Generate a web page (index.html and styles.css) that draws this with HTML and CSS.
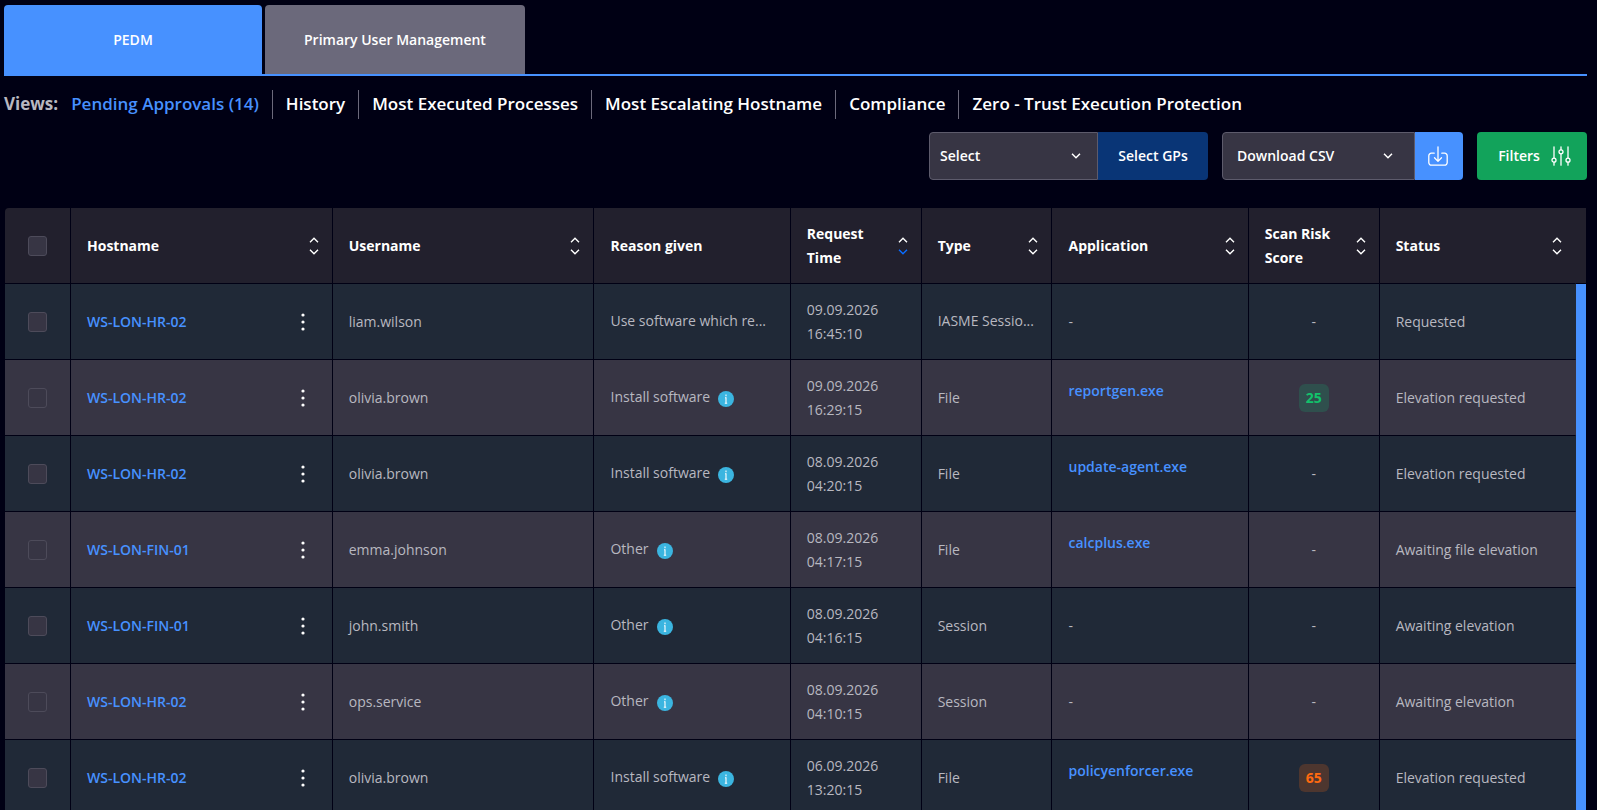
FILE: index.html
```html
<!DOCTYPE html>
<html lang="en">
<head>
<meta charset="utf-8">
<title>PEDM - Pending Approvals</title>
<link rel="stylesheet" href="styles.css">
</head>
<body>
<svg class="defs" aria-hidden="true">
  <symbol id="up" viewBox="0 0 10 6"><path d="M1 5.2 5 1.2l4 4"/></symbol>
  <symbol id="down" viewBox="0 0 10 6"><path d="M1 .8l4 4 4-4"/></symbol>
  <symbol id="dots" viewBox="0 0 4 18"><circle cx="2" cy="2" r="1.6"/><circle cx="2" cy="9" r="1.6"/><circle cx="2" cy="16" r="1.6"/></symbol>
  <symbol id="info" viewBox="0 0 16 16"><circle cx="8" cy="8" r="8" fill="#3bb5e0"/><path d="M8 3.6v1.6M7 6.8h1v5.4M6.8 12.2h2.4" fill="none" stroke="#fff" stroke-width="1.1"/></symbol>
</svg>
<main class="page">
  <nav class="tabs">
    <button class="tab tab-active" type="button">PEDM</button>
    <button class="tab" type="button">Primary User Management</button>
  </nav>
  <nav class="views">
    <span class="views-label">Views:</span>
    <a class="view view-active" href="#">Pending Approvals (14)</a>
    <a class="view" href="#">History</a>
    <a class="view" href="#">Most Executed Processes</a>
    <a class="view" href="#">Most Escalating Hostname</a>
    <a class="view" href="#">Compliance</a>
    <a class="view" href="#">Zero - Trust Execution Protection</a>
  </nav>
  <div class="toolbar">
    <div class="group">
      <select class="select select-action" aria-label="Select action"><option>Select</option></select>
      <button class="btn btn-gps" type="button">Select GPs</button>
    </div>
    <div class="group">
      <select class="select select-csv" aria-label="Download format"><option>Download CSV</option></select>
      <button class="btn btn-download" type="button" aria-label="Download">
        <svg width="20" height="20" viewBox="0 0 20 20" fill="none" stroke="currentColor" stroke-width="1.3" stroke-linecap="round" stroke-linejoin="round"><path d="M10 .8v14.4M6.5 11.8l3.5 3.6 3.5-3.6M6.2 7.2H3.4A2.6 2.6 0 0 0 .8 9.8v6.8a2.6 2.6 0 0 0 2.6 2.6h13.2a2.6 2.6 0 0 0 2.6-2.6V9.8a2.6 2.6 0 0 0-2.6-2.6h-2.8"/></svg>
      </button>
    </div>
    <button class="btn btn-filters" type="button">Filters
      <svg width="20" height="20" viewBox="0 0 20 20" fill="none" stroke="currentColor" stroke-width="1.3" stroke-linecap="round"><path d="M3 .8v11.4M3 16.2v3M10 .8v3M10 7.8v11.4M17 .8v11.4M17 16.2v3"/><circle cx="3" cy="14.2" r="2"/><circle cx="10" cy="5.8" r="2"/><circle cx="17" cy="14.2" r="2"/></svg>
    </button>
  </div>
  <div class="table-box">
    <table class="grid">
      <colgroup><col class="u1"><col class="u4"><col class="u4"><col class="u3"><col class="u2"><col class="u2"><col class="u3"><col class="u2"><col class="u3"></colgroup>
      <thead>
        <tr>
          <th class="pick"><input type="checkbox" aria-label="Select all"></th>
          <th><div class="head">Hostname<button class="sort" type="button" aria-label="Sort by hostname"><svg><use href="#up"/></svg><svg><use href="#down"/></svg></button></div></th>
          <th><div class="head">Username<button class="sort" type="button" aria-label="Sort by username"><svg><use href="#up"/></svg><svg><use href="#down"/></svg></button></div></th>
          <th>Reason given</th>
          <th><div class="head">Request Time<button class="sort sort-desc" type="button" aria-label="Sort by request time"><svg><use href="#up"/></svg><svg><use href="#down"/></svg></button></div></th>
          <th><div class="head">Type<button class="sort" type="button" aria-label="Sort by type"><svg><use href="#up"/></svg><svg><use href="#down"/></svg></button></div></th>
          <th><div class="head">Application<button class="sort" type="button" aria-label="Sort by application"><svg><use href="#up"/></svg><svg><use href="#down"/></svg></button></div></th>
          <th><div class="head">Scan Risk Score<button class="sort" type="button" aria-label="Sort by scan risk score"><svg><use href="#up"/></svg><svg><use href="#down"/></svg></button></div></th>
          <th><div class="head">Status<button class="sort" type="button" aria-label="Sort by status"><svg><use href="#up"/></svg><svg><use href="#down"/></svg></button></div></th>
        </tr>
      </thead>
      <tbody>
        <tr>
          <td class="pick"><input type="checkbox" aria-label="Select row"></td>
          <td><div class="host"><a href="#">WS-LON-HR-02</a><button class="more" type="button" aria-label="More"><svg><use href="#dots"/></svg></button></div></td>
          <td>liam.wilson</td>
          <td><div class="clip">Use software which re...</div></td>
          <td>09.09.2026 16:45:10</td>
          <td><div class="clip">IASME Sessio...</div></td>
          <td>-</td>
          <td class="score">-</td>
          <td>Requested</td>
        </tr>
        <tr>
          <td class="pick"><input type="checkbox" aria-label="Select row"></td>
          <td><div class="host"><a href="#">WS-LON-HR-02</a><button class="more" type="button" aria-label="More"><svg><use href="#dots"/></svg></button></div></td>
          <td>olivia.brown</td>
          <td><div class="reason">Install software<svg class="info"><use href="#info"/></svg></div></td>
          <td>09.09.2026 16:29:15</td>
          <td>File</td>
          <td><a class="app" href="#">reportgen.exe</a></td>
          <td class="score"><span class="badge badge-low">25</span></td>
          <td>Elevation requested</td>
        </tr>
        <tr>
          <td class="pick"><input type="checkbox" aria-label="Select row"></td>
          <td><div class="host"><a href="#">WS-LON-HR-02</a><button class="more" type="button" aria-label="More"><svg><use href="#dots"/></svg></button></div></td>
          <td>olivia.brown</td>
          <td><div class="reason">Install software<svg class="info"><use href="#info"/></svg></div></td>
          <td>08.09.2026 04:20:15</td>
          <td>File</td>
          <td><a class="app" href="#">update-agent.exe</a></td>
          <td class="score">-</td>
          <td>Elevation requested</td>
        </tr>
        <tr>
          <td class="pick"><input type="checkbox" aria-label="Select row"></td>
          <td><div class="host"><a href="#">WS-LON-FIN-01</a><button class="more" type="button" aria-label="More"><svg><use href="#dots"/></svg></button></div></td>
          <td>emma.johnson</td>
          <td><div class="reason">Other<svg class="info"><use href="#info"/></svg></div></td>
          <td>08.09.2026 04:17:15</td>
          <td>File</td>
          <td><a class="app" href="#">calcplus.exe</a></td>
          <td class="score">-</td>
          <td>Awaiting file elevation</td>
        </tr>
        <tr>
          <td class="pick"><input type="checkbox" aria-label="Select row"></td>
          <td><div class="host"><a href="#">WS-LON-FIN-01</a><button class="more" type="button" aria-label="More"><svg><use href="#dots"/></svg></button></div></td>
          <td>john.smith</td>
          <td><div class="reason">Other<svg class="info"><use href="#info"/></svg></div></td>
          <td>08.09.2026 04:16:15</td>
          <td>Session</td>
          <td>-</td>
          <td class="score">-</td>
          <td>Awaiting elevation</td>
        </tr>
        <tr>
          <td class="pick"><input type="checkbox" aria-label="Select row"></td>
          <td><div class="host"><a href="#">WS-LON-HR-02</a><button class="more" type="button" aria-label="More"><svg><use href="#dots"/></svg></button></div></td>
          <td>ops.service</td>
          <td><div class="reason">Other<svg class="info"><use href="#info"/></svg></div></td>
          <td>08.09.2026 04:10:15</td>
          <td>Session</td>
          <td>-</td>
          <td class="score">-</td>
          <td>Awaiting elevation</td>
        </tr>
        <tr>
          <td class="pick"><input type="checkbox" aria-label="Select row"></td>
          <td><div class="host"><a href="#">WS-LON-HR-02</a><button class="more" type="button" aria-label="More"><svg><use href="#dots"/></svg></button></div></td>
          <td>olivia.brown</td>
          <td><div class="reason">Install software<svg class="info"><use href="#info"/></svg></div></td>
          <td>06.09.2026 13:20:15</td>
          <td>File</td>
          <td><a class="app" href="#">policyenforcer.exe</a></td>
          <td class="score"><span class="badge badge-mid">65</span></td>
          <td>Elevation requested</td>
        </tr>
      </tbody>
    </table>
    <div class="scroll"><div class="scroll-head"></div><div class="scroll-thumb"></div></div>
  </div>
</main>
</body>
</html>
```
FILE: styles.css
```css
* { box-sizing: border-box; }

body {
  margin: 0;
  background: #000014;
  color: #b8b8c0;
  font: 14px/24px "Open Sans", "Noto Sans", sans-serif;
}

button, select { font: inherit; font-weight: 600; color: #fff; border: 0; cursor: pointer; }
a { color: #4791ff; font-weight: 600; text-decoration: none; }
.defs { position: absolute; width: 0; height: 0; }

.page {
  height: 100vh;
  overflow: hidden;
  padding: 5px 10px 0 4px;
}

.tabs {
  display: flex;
  gap: 3px;
  border-bottom: 2px solid #4791ff;
}
.tab {
  min-width: 258px;
  height: 69px;
  padding: 0 39px;
  border-radius: 4px 4px 0 0;
  background: #6b697b;
}
.tab-active { background: #4791ff; }

.views {
  display: flex;
  align-items: center;
  padding-top: 14px;
  font-size: 17px;
}
.views-label { font-weight: 700; }
.views-label, .view { line-height: 23px; }
.view {
  padding: 2px 13px 4px;
  color: #fff;
  border-left: 1px solid #6b697b;
}
.views-label { padding-bottom: 2px; }
.view-active { border-left: 0; color: #4791ff; }

.toolbar {
  display: flex;
  justify-content: flex-end;
  gap: 14px;
  padding-top: 13px;
}
.group { display: flex; }
.select {
  height: 48px;
  padding: 0 10px;
  appearance: none;
  border: 1px solid #5d5b6c;
  border-radius: 4px 0 0 4px;
  background: #373544 url("data:image/svg+xml,%3Csvg xmlns='http://www.w3.org/2000/svg' width='10' height='6' fill='none' stroke='white' stroke-width='1.5'%3E%3Cpath d='M1 .8l4 4 4-4'/%3E%3C/svg%3E") no-repeat right 16px center;
}
.select-action { width: 169px; }
.select-csv { width: 193px; padding-left: 14px; background-position: right 21px center; }
.btn {
  display: flex;
  align-items: center;
  justify-content: center;
  gap: 11px;
  height: 48px;
  padding: 0;
  border-radius: 0 4px 4px 0;
}
.btn-gps { width: 110px; background: #093576; }
.btn-download { width: 48px; padding-right: 3px; background: #4791ff; }
.btn-filters { width: 110px; padding-left: 5px; border-radius: 4px; background: #12a35b; }

.table-box {
  display: flex;
  margin: 28px 1px 0;
  border-radius: 4px 0 0;
  overflow: hidden;
}
.grid {
  flex: 1;
  width: 100%;
  min-width: 0;
  table-layout: fixed;
  border-collapse: separate;
  border-spacing: 0;
}
.u1 { width: 66px; }
.u2 { width: 8.3333%; }
.u3 { width: 12.5%; }
.u4 { width: 16.6667%; }

th, td {
  height: 76px;
  padding: 0 16px;
  text-align: left;
  vertical-align: middle;
  border-right: 1px solid #000014;
  border-bottom: 1px solid #000014;
}
th { background: #22202d; color: #fff; font-weight: 700; }
th:last-child { border-right-color: #22202d; }
td:last-child { border-right-color: transparent; }
tbody tr { background: #202937; }
tbody tr:nth-child(even) { background: #373544; }

.pick { padding: 0; text-align: center; }
.pick input {
  display: block;
  width: 19px;
  height: 20px;
  margin: 0 auto;
  appearance: none;
  border: 1px solid #4d4b5a;
  border-radius: 3px;
  background: #373544;
}

.head, .host { display: flex; align-items: center; justify-content: space-between; }
.sort {
  display: flex;
  flex-direction: column;
  gap: 6px;
  margin-right: -3px;
  padding: 0;
  background: none;
}
.sort svg { width: 10px; height: 6px; fill: none; stroke: #fff; stroke-width: 1.4; }
.sort-desc svg:last-child { stroke: #0a6cff; }
.more { display: flex; margin-right: 11px; padding: 0; background: none; }
.more svg { width: 4px; height: 18px; fill: #fff; }

.clip { overflow: hidden; white-space: nowrap; text-overflow: ellipsis; padding-bottom: 2px; }
.reason { padding-bottom: 2px; }
.info { width: 16px; height: 16px; margin-left: 8px; vertical-align: -5px; }
.app { display: block; padding-bottom: 14px; }

.score { text-align: center; }
.badge {
  display: inline-block;
  padding: 2px 7px;
  border-radius: 6px;
  font-weight: 700;
}
.badge-low { background: #2f4f4d; color: #12c26b; }
.badge-mid { background: #4d362f; color: #ff6a0f; }

.scroll { display: flex; flex-direction: column; flex: none; width: 10px; }
.scroll-head { height: 76px; background: #22202d; border-bottom: 1px solid #000014; }
.scroll-thumb { flex: 1; background: #4791ff; }
```
